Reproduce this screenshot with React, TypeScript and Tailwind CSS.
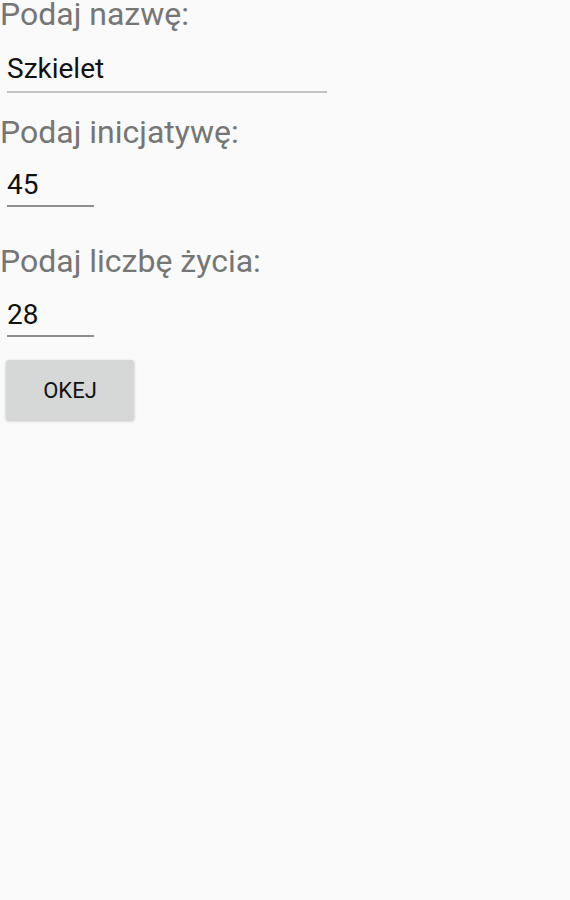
import React from "react"

const App: React.FC = () => {
  return (
    <div className="w-[570px] h-[900px] bg-[#fafafa] font-['Roboto',sans-serif] overflow-hidden">
      <div className="flex flex-col items-start">
        <span className="block text-[32px] leading-[28px] text-[#767676]">Podaj nazwę:</span>
        <div className="ml-[7px] mt-[27px] w-[320px] text-[28px] leading-[28px] text-[#111] pb-[8px] border-b-2 border-[#c4c4c4]">
          Szkielet
        </div>

        <span className="block text-[32px] leading-[32px] text-[#767676] mt-[23px]">Podaj inicjatywę:</span>
        <div className="ml-[7px] mt-[23px] w-[87px] text-[28px] leading-[28px] text-[#111] pb-[6px] border-b-2 border-[#8f8f8f]">
          45
        </div>

        <span className="block text-[32px] leading-[32px] text-[#767676] mt-[38px]">Podaj liczbę życia:</span>
        <div className="ml-[7px] mt-[24px] w-[87px] text-[28px] leading-[28px] text-[#111] pb-[6px] border-b-2 border-[#8f8f8f]">
          28
        </div>

        <button className="ml-[6px] mt-[23px] w-[128px] h-[60px] bg-[#d6d7d7] rounded-[3px] shadow-[0_1px_3px_rgba(0,0,0,0.25)] text-[22px] font-normal text-[#111]">
          OKEJ
        </button>
      </div>
    </div>
  )
}

export default App
